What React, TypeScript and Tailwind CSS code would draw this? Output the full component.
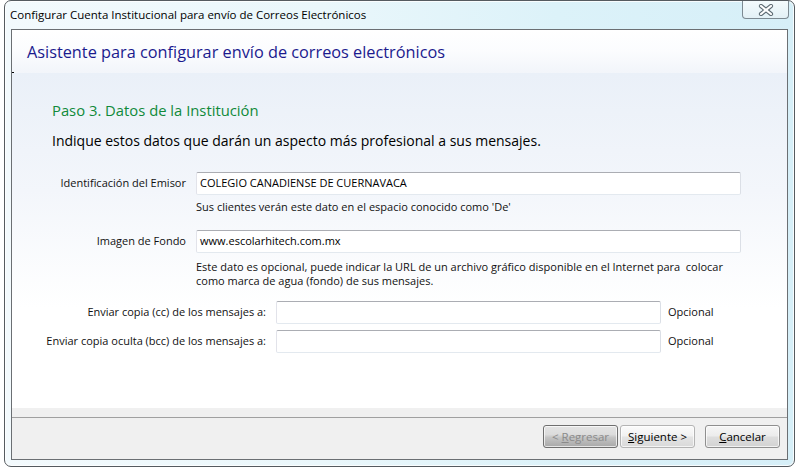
import React from "react";

const font = "font-['Open_Sans',sans-serif]";

function TextBox({ value, className }: { value?: string; className: string }) {
  return (
    <div
      className={`h-[23px] bg-white border border-[#e3e9ef] border-t-[#abadb3] border-l-[#e2e3ea] border-r-[#dbdfe6] rounded-[2px] flex items-center pl-[3px] text-[11px] text-black ${className}`}
    >
      {value}
    </div>
  );
}

function WinButton({
  children,
  variant = "normal",
}: {
  children: React.ReactNode;
  variant?: "normal" | "pressed" | "light";
}) {
  const styles =
    variant === "pressed"
      ? "border-[#6f6f6f] text-[#8a8a8a] bg-[linear-gradient(#e4e4e4_0%,#dcdcdc_40%,#c4c4c4_55%,#a8a8a8_100%)]"
      : variant === "light"
      ? "border-[#b4b4b4] text-black bg-[linear-gradient(#fbfbfb_0%,#f1f1f1_48%,#e4e4e4_52%,#d9d9d9_100%)]"
      : "border-[#8f8f8f] text-black bg-[linear-gradient(#f6f6f6_0%,#ececec_48%,#dedede_52%,#d2d2d2_100%)]";
  return (
    <button
      className={`w-[75px] h-[23px] rounded-[3px] border text-[11.5px] flex items-center justify-center shadow-[inset_0_0_0_1px_rgba(255,255,255,0.7)] ${styles}`}
    >
      {children}
    </button>
  );
}

function CloseGlyph() {
  return (
    <svg width="16" height="12" viewBox="0 0 16 12">
      <line x1="3" y1="2" x2="13" y2="10" stroke="#5d6b73" strokeWidth="4.2" strokeLinecap="round" />
      <line x1="13" y1="2" x2="3" y2="10" stroke="#5d6b73" strokeWidth="4.2" strokeLinecap="round" />
      <line x1="3" y1="2" x2="13" y2="10" stroke="#ffffff" strokeWidth="2.2" strokeLinecap="round" />
      <line x1="13" y1="2" x2="3" y2="10" stroke="#ffffff" strokeWidth="2.2" strokeLinecap="round" />
    </svg>
  );
}

export default function App() {
  return (
    <div className={`w-[800px] h-[468px] bg-white pl-[4px] pr-[5px] pb-[1px] ${font}`}>
      <div className="h-full flex flex-col border border-[#555b60] rounded-[7px] bg-[linear-gradient(90deg,#f3fafd_0%,#eaf7fb_40%,#dcf2f9_70%,#d6eff8_100%)] shadow-[inset_0_0_0_1px_rgba(255,255,255,0.8)]">
        {/* title bar */}
        <div className="h-[28px] flex items-start justify-between">
          <div className="pl-[5px] pt-[5px] text-[11.5px] leading-[18px] text-black">
            Configurar Cuenta Institucional para envío de Correos Electrónicos
          </div>
          <div className="mr-[5px] w-[47px] h-[18px] border border-t-0 border-[#7d8a92] rounded-b-[4px] bg-[linear-gradient(#f4fbfd,#e3f1f6)] flex items-center justify-center">
            <CloseGlyph />
          </div>
        </div>

        {/* client area */}
        <div className="mx-[6px] mb-[6px] flex-1 flex flex-col border border-[#6b6f73] bg-white">
          {/* header */}
          <div className="h-[43px] flex items-center pl-[15px] bg-[linear-gradient(#ffffff_0%,#fbfcfe_50%,#f2f5fa_100%)]">
            <span className="text-[16.3px] text-[#1b1a8e] leading-none pt-[1px]">
              Asistente para configurar envío de correos electrónicos
            </span>
          </div>

          {/* body */}
          <div className="relative flex-1 flex flex-col bg-[linear-gradient(#eaf0f8_0%,#f3f6fb_35%,#ffffff_70%,#ffffff_100%)]">
            <div className="absolute left-0 top-[-1px] w-[2px] h-[1px] bg-black" />
            <div className="pl-[40px] pt-[27px] text-[14.8px] leading-[20px] text-[#108a3a]">
              Paso 3. Datos de la Institución
            </div>
            <div className="pl-[40px] mt-[11px] text-[14px] leading-[20px] text-black">
              Indique estos datos que darán un aspecto más profesional a sus mensajes.
            </div>

            <div className="mt-[21px] flex items-center text-[11px] text-[#111]">
              <div className="w-[174px] text-right">Identificación del Emisor</div>
              <TextBox value="COLEGIO CANADIENSE DE CUERNAVACA" className="ml-[10px] w-[545px]" />
            </div>
            <div className="mt-[4px] pl-[184px] text-[11px] leading-[16px] text-[#111]">
              Sus clientes verán este dato en el espacio conocido como 'De'
            </div>

            <div className="mt-[15px] flex items-center text-[11px] text-[#111]">
              <div className="w-[174px] text-right">Imagen de Fondo</div>
              <TextBox value="www.escolarhitech.com.mx" className="ml-[10px] w-[545px]" />
            </div>
            <div className="mt-[7px] pl-[184px] text-[11px] leading-[14px] text-[#111]">
              Este dato es opcional, puede indicar la URL de un archivo gráfico disponible en el Internet para&nbsp; colocar
              <br />
              como marca de agua (fondo) de sus mensajes.
            </div>

            <div className="mt-[13px] flex items-center text-[11px] text-[#111]">
              <div className="w-[254px] text-right">Enviar copia (cc) de los mensajes a:</div>
              <TextBox className="ml-[10px] w-[385px]" />
              <div className="ml-[7px]">Opcional</div>
            </div>
            <div className="mt-[6px] flex items-center text-[11px] text-[#111]">
              <div className="w-[254px] text-right">Enviar copia oculta (bcc) de los mensajes a:</div>
              <TextBox className="ml-[10px] w-[385px]" />
              <div className="ml-[7px]">Opcional</div>
            </div>
          </div>

          {/* footer */}
          <div className="h-[9px] bg-[#f0f0f0]" />
          <div className="h-[42px] bg-[#f0f0f0] border-t border-[#a0a0a0] flex items-start justify-end pt-[7px] pr-[7px]">
            <WinButton variant="pressed">
              &lt;&nbsp;<span className="underline">R</span>egresar
            </WinButton>
            <div className="ml-[2px]">
              <WinButton variant="light">
                <span className="underline">S</span>iguiente &gt;
              </WinButton>
            </div>
            <div className="ml-[10px]">
              <WinButton>
                <span className="underline">C</span>ancelar
              </WinButton>
            </div>
          </div>
        </div>
      </div>
    </div>
  );
}
